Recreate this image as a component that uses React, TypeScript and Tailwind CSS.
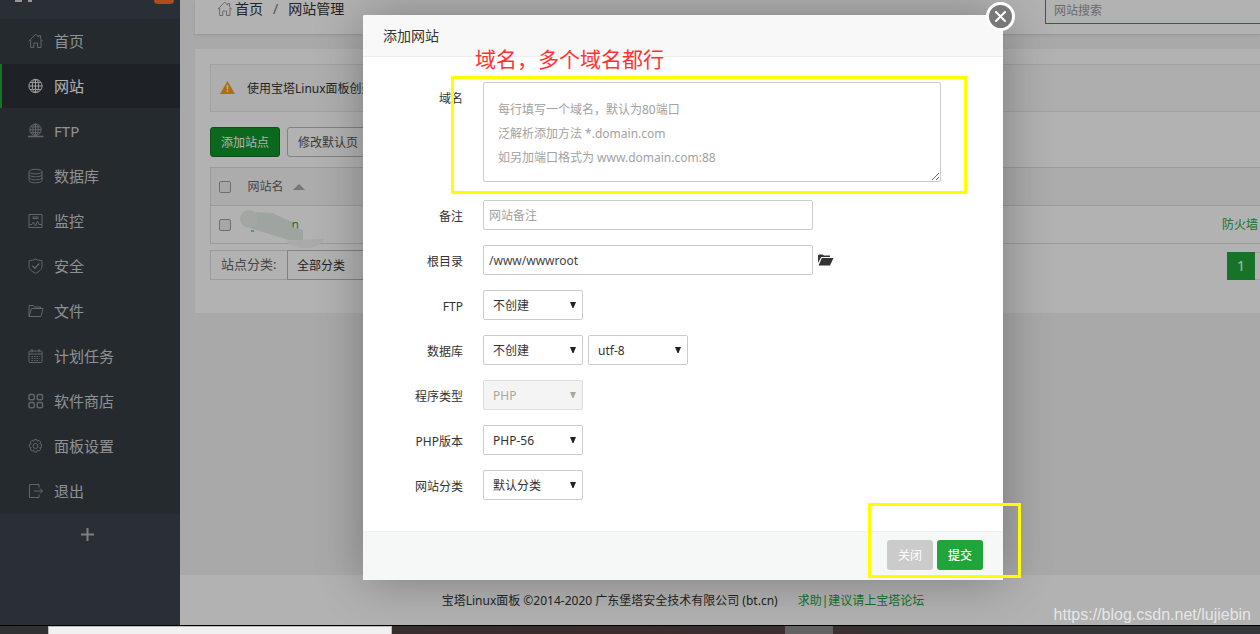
import type { ReactNode } from "react";

function Icon({ children, size = 16 }: { children: ReactNode; size?: number }) {
  return (
    <svg
      width={size}
      height={size}
      viewBox="0 0 16 16"
      fill="none"
      stroke="currentColor"
      strokeWidth="1"
      className="shrink-0"
      aria-hidden="true"
    >
      {children}
    </svg>
  );
}

const homeShape = (
  <>
    <path d="M.7 8.3 7.7 1.2l3 3V2.6h2v3.6l2.2 2.1" />
    <path d="M2.6 7v7.5h3.2V10h3.8v4.5H13V7" />
  </>
);

const globeShape = (
  <>
    <circle cx="7.5" cy="8" r="6.6" />
    <ellipse cx="7.5" cy="8" rx="3.2" ry="6.6" />
    <path d="M7.5 1.4v13.2M.9 8h13.2M2 4.6h11M2 11.4h11" />
  </>
);

const ftpShape = (
  <>
    <circle cx="7.5" cy="6.7" r="5.7" />
    <ellipse cx="7.5" cy="6.7" rx="2.7" ry="5.7" />
    <path d="M7.5 1v12M2 6.7h11M3 3.9h9M3 9.6h9" />
    <path d="M0 13.5h15.5" strokeWidth="1.6" />
  </>
);

const databaseShape = (
  <>
    <ellipse cx="7.5" cy="3.6" rx="6.5" ry="2.3" />
    <path d="M1 3.6v9c0 1.2 2.9 2.2 6.5 2.2s6.5-1 6.5-2.2v-9" />
    <path d="M1 6.6c0 1.2 2.9 2.2 6.5 2.2S14 7.8 14 6.6M1 9.6c0 1.2 2.9 2.2 6.5 2.2s6.5-1 6.5-2.2" />
  </>
);

const monitorShape = (
  <>
    <path d="M1 1.5h13v13H1z" />
    <path d="M4.5 4h6M4.5 5.5h6" />
    <path d="M1.5 11.5H4L5.5 9l2 4 2-5 1.5 3.5h3" />
  </>
);

const shieldShape = (
  <>
    <path d="M7.5 1C5.5 2.3 3.3 2.5 1 2.7V8c0 3.5 3 5.7 6.5 7.3C11 13.7 14 11.5 14 8V2.7C11.7 2.5 9.5 2.3 7.5 1Z" />
    <path d="m4.2 7.6 2.6 2.7 4.5-4.8" strokeWidth="1.3" />
  </>
);

const folderShape = (
  <>
    <path d="M1 13.5V2.500h4.500l1 1.500H12.500v1.500" />
    <path d="M1 13.5 3.500 5.500h11.500l-2 8z" />
  </>
);

const calendarShape = (
  <>
    <rect x="1" y="3" width="13" height="11.5" rx="1" />
    <path d="M1 6h13M4 1v3.5M11 1v3.5" />
    <path d="M3.5 8.5h8M3.5 10.5h8M3.5 12.5h8" strokeDasharray="1.5 1" />
  </>
);

const gridShape = (
  <g strokeWidth="1.5">
    <rect x="1" y="1.5" width="5.3" height="5.3" rx="1.4" />
    <rect x="9.2" y="1.5" width="5.3" height="5.3" rx="1.4" />
    <rect x="1" y="9.5" width="5.3" height="5.3" rx="1.4" />
    <rect x="9.2" y="9.5" width="5.3" height="5.3" rx="1.4" />
  </g>
);

const gearShape = (
  <>
    <circle cx="7.5" cy="8" r="2.5" />
    <path d="M6.3 1.5h2.4l.5 1.7 1.7-.9 1.8 1.8-.9 1.700 1.800.5v2.800l-1.800.5.9 1.700-1.800 1.800-1.700-.9-.5 1.800H6.300l-.5-1.800-1.700.9-1.800-1.800.9-1.700-1.800-.5V6.300l1.800-.5-.9-1.700 1.800-1.800 1.700.9z" />
  </>
);

const exitShape = (
  <>
    <path d="M11 4.5V1.5H1.5v13H11v-3" />
    <path d="M6 8h8.5M12 5.5 14.5 8 12 10.5" />
  </>
);

const navItems = [
  { label: "首页", shape: homeShape },
  { label: "网站", shape: globeShape, active: true },
  { label: "FTP", shape: ftpShape },
  { label: "数据库", shape: databaseShape },
  { label: "监控", shape: monitorShape },
  { label: "安全", shape: shieldShape },
  { label: "文件", shape: folderShape },
  { label: "计划任务", shape: calendarShape },
  { label: "软件商店", shape: gridShape },
  { label: "面板设置", shape: gearShape },
  { label: "退出", shape: exitShape },
];

function Sidebar() {
  return (
    <aside className="flex w-[180px] shrink-0 flex-col bg-[#3c444d]">
      <div className="flex h-[19px] shrink-0 items-start justify-between pr-[6px] pl-[15px]">
        <svg width="18" height="3" viewBox="0 0 18 3" fill="#d8d8d8" aria-hidden="true">
          <path d="M0 0h7v2H0zM13 0h4v2h-4z" />
        </svg>
        <span className="h-1 w-5 rounded-b-full bg-[#fc6d26]" />
      </div>
      <nav className="bg-[#353d44]">
        <ul>
          {navItems.map((item) => (
            <li key={item.label} className="h-[45px] border-b border-[#353d44]">
              <a
                href="#"
                className={
                  item.active
                    ? "flex h-full items-center gap-[10px] border-l-2 border-[#20a53a] bg-[#2c3138] pl-[26px] text-[15px] text-white"
                    : "flex h-full items-center gap-[10px] border-l-2 border-[#3a3d3e] pl-[26px] text-[15px] text-[#ced0d2]"
                }
              >
                <span className={item.active ? "text-[#e4e4e4]" : "text-[#8d9194]"}>
                  <Icon>{item.shape}</Icon>
                </span>
                {item.label}
              </a>
            </li>
          ))}
        </ul>
      </nav>
      <button type="button" aria-label="添加菜单" className="flex h-10 items-center justify-center pr-[5px] text-[#b5b7ba]">
        <svg width="13" height="13" viewBox="0 0 13 13" stroke="currentColor" strokeWidth="2" aria-hidden="true">
          <path d="M6.500 0v13M0 6.500h13" />
        </svg>
      </button>
    </aside>
  );
}

const boxClass = "block size-3 appearance-none rounded-xs border border-[#a0a0a0] bg-[#f0f0f0]";

function SitePage() {
  return (
    <div className="flex min-w-0 flex-1 flex-col bg-[#f2f2f2]">
      <header className="ml-[15px] flex h-[34px] shrink-0 items-start justify-between bg-white pl-[22px] shadow-sm">
        <nav className="flex h-[18px] items-center text-sm text-[#333]">
          <a href="#" className="flex items-center gap-[2px]">
            <span className="text-[#999]">
              <Icon>{homeShape}</Icon>
            </span>
            首页
          </a>
          <span className="px-[10px] text-[#777]">/</span>
          <span>网站管理</span>
        </nav>
        <input
          type="text"
          aria-label="网站搜索"
          placeholder="网站搜索"
          className="h-6 w-[215px] border-b border-l border-[#20a53a] pb-[2px] pl-2 placeholder:text-[#999]"
        />
      </header>

      <main className="mt-[15px] ml-[15px] bg-white pt-[15px] pl-[15px]">
        <div className="flex h-12 items-center gap-3 border-y border-l border-[#e8e8e8] bg-[#fafafa] pt-[2px] pl-[9px] text-[#333]">
          <svg width="15" height="13" viewBox="0 0 15 13" className="mb-[3px]" aria-hidden="true">
            <path d="M7.500 0 15 13H0z" fill="#f5a111" />
            <path d="M7.500 4v4.500M7.500 9.500v1.500" stroke="#fff" strokeWidth="1.600" />
          </svg>
          <p>使用宝塔Linux面板创建</p>
        </div>

        <div className="mt-[15px] flex gap-[7px]">
          <button type="button" className="h-[30px] w-[70px] rounded-[3px] border border-[#14702a] bg-[#10952a] pt-[2px] text-white">
            添加站点
          </button>
          <button type="button" className="h-[30px] rounded-[3px] border border-[#bbb] px-[10px] pt-[2px] text-[#555]">
            修改默认页
          </button>
        </div>

        <table className="mt-[10px] w-full border-y border-l border-[#dfdfdf] text-left">
          <thead>
            <tr className="h-[38px] border-b border-[#dfdfdf] bg-[#f6f6f6] text-[#666]">
              <th className="w-[37px] pl-2">
                <input type="checkbox" aria-label="全选" className={boxClass} />
              </th>
              <th className="font-normal">
                <span className="flex items-center gap-[9px]">
                  网站名
                  <svg width="12" height="6" viewBox="0 0 12 6" fill="#aaa" aria-hidden="true">
                    <path d="M0 6 6 0l6 6z" />
                  </svg>
                </span>
              </th>
              <th aria-label="操作" />
            </tr>
          </thead>
          <tbody>
            <tr className="h-[38px]">
              <td className="pl-2">
                <input type="checkbox" aria-label="选择网站" className={boxClass} />
              </td>
              <td className="relative">
                <a href="#" className="pl-[35px] text-[#20a53a]">
                  .cn
                </a>
                <svg className="absolute -top-1 -left-[10px]" width="88" height="50" viewBox="0 0 88 50" aria-hidden="true">
                  <path d="M13 29h3" stroke="#20a53a" />
                  <path d="M48 39 75 37h12c-8 11-27 13-39 2z" fill="#f3f5f3" />
                  <path d="M18 10 34 11 54 20v5l11 3v10H50L12 26z" fill="#e3ece6" />
                  <circle cx="11" cy="17" r="9" fill="#eaf0eb" />
                </svg>
              </td>
              <td className="pr-[2px] text-right">
                <a href="#" className="text-[#20a53a]">
                  防火墙
                </a>
              </td>
            </tr>
          </tbody>
        </table>

        <div className="flex items-start justify-between pt-[6px] pb-[33px]">
          <div className="flex h-[30px] items-stretch">
            <label htmlFor="category" className="flex w-[77px] items-center border-y border-l border-[#dfdfdf] pl-[10px] text-[13px] text-[#666]">
              站点分类:
            </label>
            <select id="category" className="w-[120px] appearance-none border border-[#bbb] pt-[2px] pl-[9px] text-[#333]">
              <option>全部分类</option>
            </select>
          </div>
          <div className="mt-[2px] flex h-7">
            <span className="flex w-7 items-center justify-center bg-[#20a53a] text-sm text-white">1</span>
            <span className="w-[5px] border-y border-[#e5e5e5]" />
          </div>
        </div>
      </main>

      <footer className="mt-auto flex h-[50px] shrink-0 items-center justify-center gap-5 bg-white pt-[2px] pr-[74px] text-[#333]">
        <span>宝塔Linux面板 ©2014-2020 广东堡塔安全技术有限公司 (bt.cn)</span>
        <a href="#" className="text-[#20a53a]">
          求助|建议请上宝塔论坛
        </a>
      </footer>
    </div>
  );
}

function Row({ label, id, children }: { label: string; id: string; children: ReactNode }) {
  return (
    <div className="flex h-8 gap-5">
      <label htmlFor={id} className="w-[100px] shrink-0 text-right leading-[34px] text-[#333]">
        {label}
      </label>
      <div className="flex h-fit items-center gap-[5px]">{children}</div>
    </div>
  );
}

function Select({ id, value, label, disabled }: { id: string; value: string; label?: string; disabled?: boolean }) {
  return (
    <span className="relative flex">
      <select
        id={id}
        aria-label={label}
        disabled={disabled}
        className="h-[30px] w-[100px] appearance-none rounded-xs border border-[#ccc] bg-white pt-[2px] pl-[9px] text-[#333] disabled:border-[#ddd] disabled:bg-[#f4f4f4] disabled:text-[#aca899]"
      >
        <option>{value}</option>
      </select>
      <svg
        className={disabled ? "pointer-events-none absolute top-3 right-[7px] text-[#aca899]" : "pointer-events-none absolute top-3 right-[7px] text-[#222]"}
        width="6"
        height="6"
        viewBox="0 0 6 6"
        fill="currentColor"
        aria-hidden="true"
      >
        <path d="M0 0h6L3.500 6h-1z" />
      </svg>
    </span>
  );
}

const textFieldClass = "h-[30px] w-[330px] rounded-xs border border-[#ccc] bg-white px-[5px] text-[#444] placeholder:text-[#a2a2a2]";

function AddSiteDialog() {
  return (
    <form
      role="dialog"
      aria-label="添加网站"
      className="absolute top-[15px] left-[363px] z-20 w-[640px] rounded-xs bg-white shadow-[1px_1px_50px_rgba(0,0,0,0.3)]"
    >
      <h2 className="h-[42px] rounded-t-xs border-b border-[#eee] bg-[#f8f8f8] pl-5 text-sm leading-[42px] text-[#333]">添加网站</h2>
      <button
        type="button"
        aria-label="关闭窗口"
        className="absolute -top-[13px] -right-3 flex size-[29px] items-center justify-center rounded-full border-[3px] border-white bg-[#787878]"
      >
        <svg width="11" height="11" viewBox="0 0 11 11" stroke="#fff" strokeWidth="2" strokeLinecap="round" aria-hidden="true">
          <path d="m1 1 9 9M10 1l-9 9" />
        </svg>
      </button>

      <div className="flex flex-col pt-[25px] pb-[16px]">
        <div className="mb-[18px] h-[100px]">
          <Row label="域名" id="domain">
            <textarea
              id="domain"
              placeholder={"每行填写一个域名，默认为80端口\n泛解析添加方法 *.domain.com\n如另加端口格式为 www.domain.com:88"}
              className="block h-[100px] w-[458px] resize rounded-xs border border-[#ccc] px-[14px] pt-[15px] pb-3 leading-6 placeholder:text-[#a2a2a2]"
            />
          </Row>
        </div>
        <div className="flex flex-col gap-[13px]">
          <Row label="备注" id="remark">
            <input id="remark" type="text" placeholder="网站备注" className={textFieldClass} />
          </Row>
          <Row label="根目录" id="root-dir">
            <input id="root-dir" type="text" defaultValue="/www/wwwroot" className={textFieldClass} />
            <button type="button" aria-label="选择目录">
              <svg width="16" height="12" viewBox="0 0 16 12" fill="#333" aria-hidden="true">
                <path d="M0 9V1.500L1 .5h3.500L6 1.500h6V3H3.200L0 9z" />
                <path d="M3.800 4H15.500L12 11.500H.5z" />
              </svg>
            </button>
          </Row>
          <Row label="FTP" id="ftp">
            <Select id="ftp" value="不创建" />
          </Row>
          <Row label="数据库" id="database">
            <Select id="database" value="不创建" />
            <Select id="charset" label="字符集" value="utf-8" />
          </Row>
          <Row label="程序类型" id="program">
            <Select id="program" value="PHP" disabled />
          </Row>
          <Row label="PHP版本" id="php-version">
            <Select id="php-version" value="PHP-56" />
          </Row>
          <Row label="网站分类" id="site-type">
            <Select id="site-type" value="默认分类" />
          </Row>
        </div>
      </div>

      <div className="mt-[13px] flex h-[49px] justify-end gap-1 border-t border-[#edf1f0] bg-[#f6f8f7] pt-2 pr-5">
        <button type="button" className="h-[30px] w-[46px] rounded-[3px] bg-[#cbcbcb] pt-[2px] text-white">
          关闭
        </button>
        <button type="submit" className="h-[30px] w-[46px] rounded-[3px] bg-[#20a53a] pt-[2px] font-medium text-white">
          提交
        </button>
      </div>

      <p className="absolute top-[29px] left-[112px] text-[21px] leading-[30px] text-[#ff3333]">域名，多个域名都行</p>
      <span className="pointer-events-none absolute top-[61px] left-[88px] h-[118px] w-[516px] border-[3px] border-[#ffff00]" />
      <span className="pointer-events-none absolute top-[488px] left-[505px] h-[75px] w-[153px] border-[3px] border-[#ffff00]" />
    </form>
  );
}

export default function App() {
  return (
    <div className="flex h-screen flex-col overflow-hidden font-['Noto_Sans','Noto_Sans_CJK_SC',sans-serif] text-xs">
      <div className="relative flex min-h-0 flex-1 overflow-hidden">
        <Sidebar />
        <SitePage />
        <div className="absolute inset-0 z-10 bg-black/30" />
        <AddSiteDialog />
        <span className="absolute right-[9px] bottom-0 z-30 font-['Liberation_Sans',sans-serif] text-base leading-5 text-white/70">
          https://blog.csdn.net/lujiebin
        </span>
      </div>
      <div className="flex h-[9px] shrink-0 border-t border-black bg-linear-to-r from-[#303133] via-[#3b2d2c] to-[#33373c]">
        <div className="ml-12 w-[344px] border-x border-t border-[#bbb] bg-[#f1f1f1]" />
        <div className="ml-[393px] w-12 bg-[#636364]" />
      </div>
    </div>
  );
}
